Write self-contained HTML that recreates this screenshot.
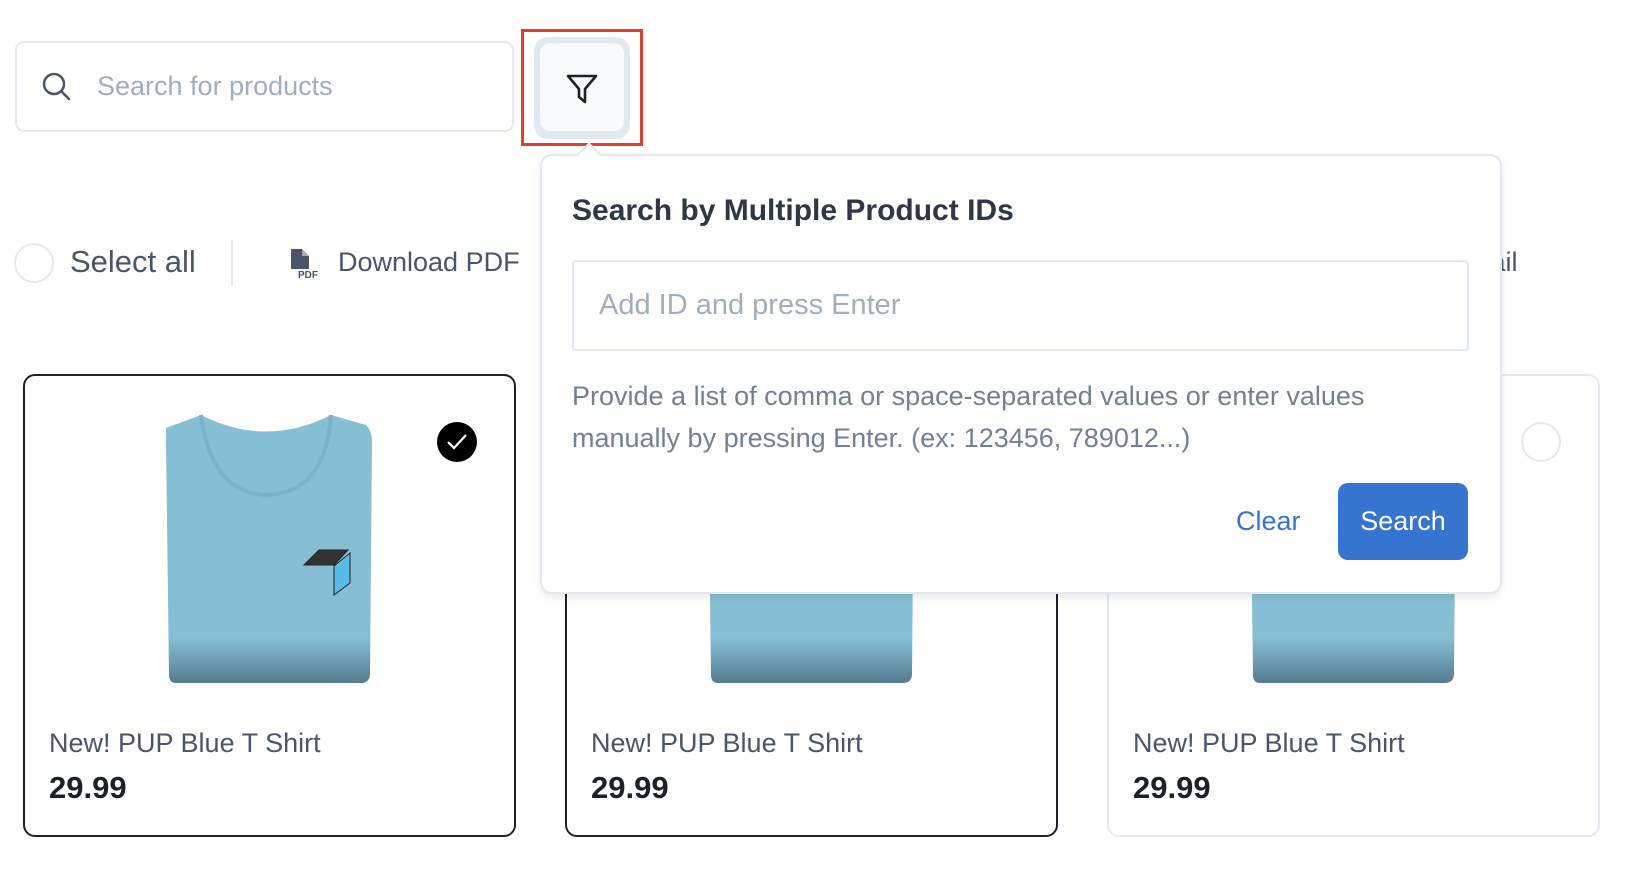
<!DOCTYPE html>
<html><head><meta charset="utf-8"><style>
*{box-sizing:border-box;margin:0;padding:0}
body{width:1634px;height:874px;background:#fff;position:relative;overflow:hidden;font-family:"Liberation Sans",sans-serif}
.abs{position:absolute}
.search{left:15px;top:41px;width:499px;height:91px;border:2px solid #e2e8f0;border-radius:9px}
.ph{color:#a0aec0;font-size:26px}
.card{position:absolute;top:374px;width:493px;height:463px;border:2px solid #1a202c;border-radius:12px;background:#fff}
.card.l{border-color:#e2e8f0}
.name{position:absolute;left:24px;top:352px;font-size:27px;color:#4a5568;font-weight:500}
.price{position:absolute;left:24px;top:394px;font-size:31px;color:#1a202c;font-weight:700}
.shirt{position:absolute;left:141px;top:37px}
</style></head><body>
<div class="abs search">
<svg class="abs" style="left:24px;top:28px" width="32" height="32" viewBox="0 0 32 32"><circle cx="13" cy="13" r="10" fill="none" stroke="#4a5568" stroke-width="2.5"/><line x1="20.5" y1="20.5" x2="28" y2="28" stroke="#4a5568" stroke-width="2.5" stroke-linecap="round"/></svg>
<div class="abs ph" style="left:80px;top:28px;font-size:27px">Search for products</div>
</div>
<div class="abs" style="left:521px;top:29px;width:122px;height:117px;border:3px solid #e0402a"></div>
<div class="abs" style="left:534px;top:37px;width:96px;height:102px;background:#e2e8f0;border-radius:14px"></div>
<div class="abs" style="left:540px;top:43px;width:84px;height:88px;background:#f8fafc;border-radius:10px"></div>
<svg class="abs" style="left:565px;top:72px" width="34" height="34" viewBox="0 0 34 34"><path d="M3 4 H31 L20 17 V30 L14 25 V17 Z" fill="none" stroke="#1a202c" stroke-width="2.6" stroke-linejoin="round"/></svg>

<div class="abs" style="left:14px;top:243px;width:40px;height:40px;border:2px solid #e2e8f0;border-radius:50%"></div>
<div class="abs" style="left:70px;top:244px;font-size:31px;color:#4a5568">Select all</div>
<div class="abs" style="left:231px;top:240px;width:2px;height:46px;background:#e2e8f0"></div>
<svg class="abs" style="left:289px;top:247px" width="34" height="34" viewBox="0 0 34 34"><path d="M2 2 H13 L20 9 V22 H2 Z" fill="#4a5568"/><path d="M13 2 V9 H20" fill="#fff" opacity=".5"/><text x="9" y="31" font-size="10" font-family="Liberation Sans" font-weight="700" fill="#4a5568">PDF</text></svg>
<div class="abs" style="left:338px;top:247px;font-size:27px;color:#4a5568">Download PDF</div>
<div class="abs" style="left:1450px;top:247px;font-size:27px;color:#4a5568">Email</div>

<div class="card" style="left:23px">
<svg class="shirt" width="206" height="270" viewBox="0 0 206 270"><defs><linearGradient id="g" x1="0" y1="0" x2="0" y2="1"><stop offset=".83" stop-color="#86bfd4"/><stop offset="1" stop-color="#557c90"/></linearGradient></defs><path d="M0 15 L35 2 Q100 35 165 2 L200 12 Q206 18 206 30 L204 262 Q203 270 195 270 L10 270 Q3 270 3 262 L0 30 Z" fill="url(#g)"/><path d="M35 2 Q45 80 100 82 Q160 80 165 2" fill="none" stroke="#7ab3c9" stroke-width="4"/><path d="M138 152 L153 137 L182 137 L168 152 Z" fill="#333" stroke="#222"/><path d="M168 153 L184 140 L184 170 L168 182 Z" fill="#5bbbe8" stroke="#222"/></svg>
<div class="abs" style="left:412px;top:46px;width:40px;height:40px;border-radius:50%;background:#000"><svg width="40" height="40" viewBox="0 0 40 40"><path d="M11 20 L17 26 L29 13" fill="none" stroke="#fff" stroke-width="2.2"/></svg></div>
<div class="name">New! PUP Blue T Shirt</div><div class="price">29.99</div>
</div>
<div class="card" style="left:565px">
<svg class="shirt" width="206" height="270" viewBox="0 0 206 270"><defs><linearGradient id="g2" x1="0" y1="0" x2="0" y2="1"><stop offset=".83" stop-color="#86bfd4"/><stop offset="1" stop-color="#557c90"/></linearGradient></defs><path d="M0 15 L35 2 Q100 35 165 2 L200 12 Q206 18 206 30 L204 262 Q203 270 195 270 L10 270 Q3 270 3 262 L0 30 Z" fill="url(#g2)"/></svg>
<div class="name">New! PUP Blue T Shirt</div><div class="price">29.99</div>
</div>
<div class="card l" style="left:1107px">
<svg class="shirt" width="206" height="270" viewBox="0 0 206 270"><defs><linearGradient id="g3" x1="0" y1="0" x2="0" y2="1"><stop offset=".83" stop-color="#86bfd4"/><stop offset="1" stop-color="#557c90"/></linearGradient></defs><path d="M0 15 L35 2 Q100 35 165 2 L200 12 Q206 18 206 30 L204 262 Q203 270 195 270 L10 270 Q3 270 3 262 L0 30 Z" fill="url(#g3)"/></svg>
<div class="abs" style="left:412px;top:46px;width:40px;height:40px;border-radius:50%;border:2px solid #e2e8f0"></div>
<div class="name">New! PUP Blue T Shirt</div><div class="price">29.99</div>
</div>

<div class="abs" style="left:540px;top:154px;width:962px;height:440px;background:#fff;border:2px solid #e2e8f0;border-radius:12px;box-shadow:0 4px 8px rgba(0,0,0,.08)"></div>
<div class="abs" style="left:580px;top:146px;width:18px;height:18px;background:#fff;border-left:2px solid #e2e8f0;border-top:2px solid #e2e8f0;transform:rotate(45deg)"></div>
<div class="abs" style="left:572px;top:194px;font-size:30px;font-weight:700;color:#2d3748">Search by Multiple Product IDs</div>
<div class="abs" style="left:572px;top:260px;width:897px;height:91px;border:2px solid #e2e8f0;border-radius:4px"><div class="abs ph" style="left:25px;top:27px;font-size:29px">Add ID and press Enter</div></div>
<div class="abs" style="left:572px;top:375px;width:830px;font-size:27px;line-height:42px;color:#718096">Provide a list of comma or space-separated values or enter values manually by pressing Enter. (ex: 123456, 789012...)</div>
<div class="abs" style="left:1236px;top:506px;font-size:27px;color:#3574d1">Clear</div>
<div class="abs" style="left:1338px;top:483px;width:130px;height:77px;background:#3574d1;border-radius:10px;color:#fff;font-size:27px;text-align:center;line-height:77px">Search</div>
</body></html>
